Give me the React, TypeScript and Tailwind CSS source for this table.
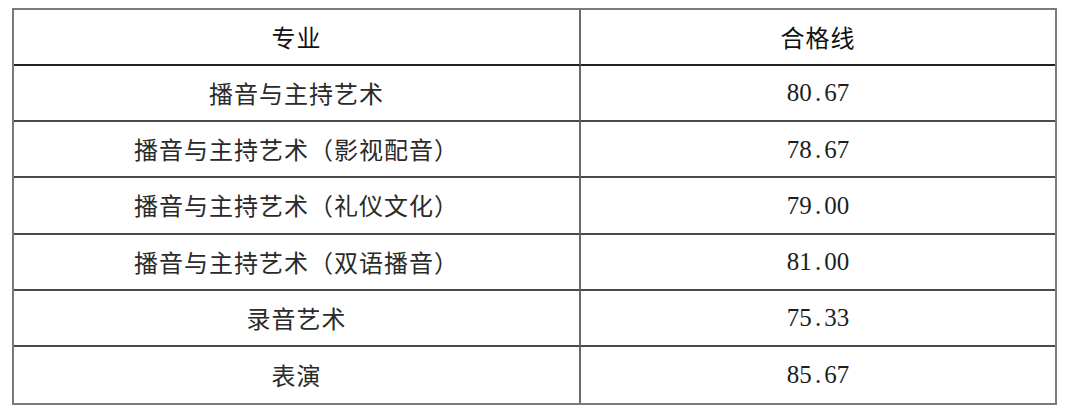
import React from "react";

const rows: [string, string][] = [
  ["播音与主持艺术", "80.67"],
  ["播音与主持艺术（影视配音）", "78.67"],
  ["播音与主持艺术（礼仪文化）", "79.00"],
  ["播音与主持艺术（双语播音）", "81.00"],
  ["录音艺术", "75.33"],
  ["表演", "85.67"],
];

const cjk = { fontFamily: '"Noto Sans CJK SC", sans-serif' };
const num = { fontFamily: '"Liberation Serif", serif' };

function Num({ v }: { v: string }) {
  const [a, b] = v.split(".");
  return (
    <span style={num} className="text-[25px] text-[#1e1e1e]">
      {a}
      <span className="inline-block w-[12.5px] text-center">.</span>
      {b}
    </span>
  );
}

export default function App() {
  return (
    <div className="w-[1080px] h-[410px] bg-white pt-[8px] pl-[12px]">
      <div className="w-[1045px] h-[397px] border-2 border-[#7a7a7a] grid grid-cols-[567px_1fr] grid-rows-7 box-border">
        <div className="border-b-2 border-[#222] border-r-2 border-r-[#6a6a6a] flex items-center justify-center">
          <span style={cjk} className="text-[24px] tracking-[1px] text-[#111] font-normal">专业</span>
        </div>
        <div className="border-b-2 border-[#222] flex items-center justify-center">
          <span style={cjk} className="text-[24px] tracking-[1px] text-[#111] font-normal">合格线</span>
        </div>
        {rows.map(([name, score], i) => (
          <React.Fragment key={i}>
            <div
              className={
                "border-r-2 border-r-[#6a6a6a] flex items-center justify-center " +
                (i < rows.length - 1 ? "border-b-2 border-b-[#4a4a4a]" : "")
              }
            >
              <span style={cjk} className="text-[24px] tracking-[1px] text-[#2a2a2a] font-normal">{name}</span>
            </div>
            <div
              className={
                "flex items-center justify-center " +
                (i < rows.length - 1 ? "border-b-2 border-b-[#4a4a4a]" : "")
              }
            >
              <Num v={score} />
            </div>
          </React.Fragment>
        ))}
      </div>
    </div>
  );
}
